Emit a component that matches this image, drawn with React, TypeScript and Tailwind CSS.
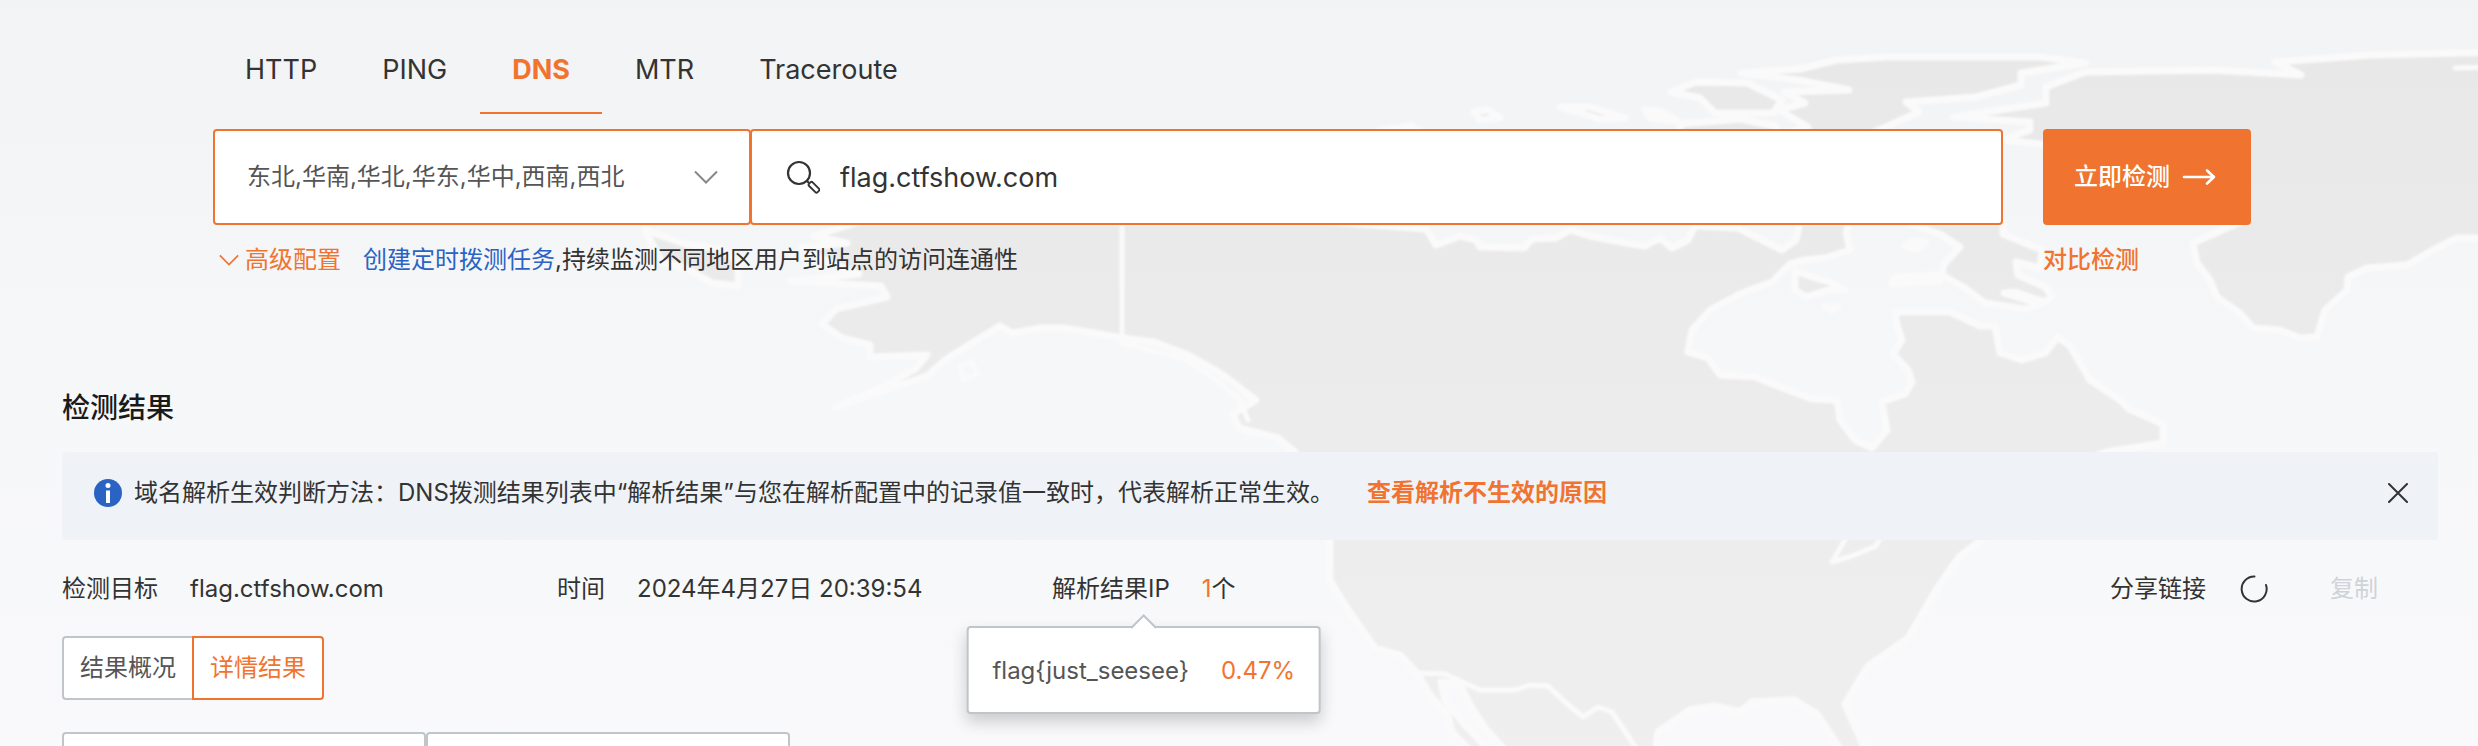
import { useState } from "react";

const TABS = ["HTTP", "PING", "DNS", "MTR", "Traceroute"];
const REGIONS = "东北,华南,华北,华东,华中,西南,西北";

const LAND = [
  // North America
  "M859 222L813 236 847 243 802 248 825 260 859 274 791 281 881 286 887 297 836 309 822 324 842 338 870 345 870 357 927 355 915 369 881 388 836 407 927 376 945 360 972 343 1000 326 1012 333 1040 328 1063 328 1100 334 1122 338 1154 342 1188 355 1215 370 1227 378 1256 400 1233 414 1239 428 1278 438 1295 452 1320 500 1330 540 1330 580 1345 605 1375 648 1400 655 1417 673 1430 695 1448 715 1452 732 1475 756 1495 756 1465 725 1445 700 1441 682 1460 684 1470 705 1485 728 1510 756 1655 756 1658 732 1690 710 1715 706 1740 712 1752 702 1794 700 1817 714 1845 756 1868 756 1845 704 1868 666 1908 638 1925 609 1936 590 1959 557 1981 540 2060 470 2106 452 2163 443 2163 424 2129 409 2120 400 2090 380 2070 346 2058 337 2045 353 2022 360 2000 353 1995 326 1980 326 1950 312 1895 312 1897 325 1902 340 1893 354 1908 370 1912 382 1905 394 1882 402 1887 430 1872 448 1855 440 1840 420 1837 400 1812 399 1780 387 1755 377 1720 375 1708 358 1688 352 1692 330 1710 310 1738 295 1750 290 1772 282 1790 264 1805 260 1825 258 1850 250 1846 232 1850 222 1800 222 1796 240 1782 250 1766 242 1738 228 1695 226 1688 240 1672 248 1660 238 1645 246 1626 243 1590 236 1570 230 1556 238 1532 239 1524 248 1480 247 1476 240 1460 236 1436 245 1426 229 1330 222Z",
  // Chukotka
  "M645 230L685 244 720 249 738 262 738 286 712 283 686 268 662 262Z",
  // Baffin
  "M1905 222L1940 234 1960 247 1944 264 1942 275 1965 288 1985 303 2025 309 2040 304 2004 293 2015 292 2045 302 2052 296 2045 287 2018 275 2016 262 2040 268 2042 250 2003 234 2003 222Z",
  "M1905 246L1912 241 1926 243 1916 249Z",
  "M1892 284L1895 277 1940 275 1940 281Z",
  "M1795 271L1812 277 1830 282 1845 290 1828 290 1806 297 1795 290Z",
  "M1825 307L1838 307 1832 310Z",
  // Greenland
  "M2500 52L2371 55 2275 62 2301 75 2212 70 2085 72 2046 87 2046 103 1954 117 2030 122 2030 130 2002 140 2100 150 2240 222 2193 243 2197 263 2210 280 2217 297 2240 313 2253 328 2280 330 2300 338 2317 337 2325 310 2347 290 2348 277 2367 268 2407 265 2433 250 2457 238 2500 238Z",
  // Ellesmere
  "M1741 73L1800 69 1836 60 1887 57 2040 57 2085 63 2021 73 2021 85 1976 97 1906 102 1919 112 1868 135 1779 135 1808 127 1779 110 1805 103 1785 92 1849 90 1798 80Z",
  "M1671 92L1696 82 1747 83 1782 100 1773 113 1715 113 1700 98Z",
  "M1560 107L1590 107 1625 118 1600 119Z",
  "M1645 110L1662 112 1677 121 1650 118Z",
  "M1474 112L1488 110 1500 118 1480 120Z",
  "M1382 130L1412 126 1422 134 1375 134Z",
  "M1680 124L1740 119 1775 126 1780 134 1680 134Z",
];

const SHORES = [
  "M1122 222V338",
  "M1122 343L1185 359 1216 380 1240 400 1248 420",
  "M1846 538L1832 562 1852 556 1876 546 1880 538",
  "M1417 673L1445 674 1480 690 1515 690 1530 685 1548 686 1565 702 1583 717 1598 707 1612 712 1640 754",
  "M960 366L972 362 978 374 964 380Z",
  "M2490 67L2455 68",
];

function WorldMap() {
  return (
    <svg
      aria-hidden="true"
      viewBox="0 0 2478 746"
      preserveAspectRatio="xMinYMin slice"
      className="pointer-events-none absolute inset-0 h-full w-full"
    >
      <defs>
        <linearGradient id="land" gradientUnits="userSpaceOnUse" x1="0" y1="50" x2="0" y2="746">
          <stop offset="0" stopColor="#e8e8e8" />
          <stop offset="1" stopColor="#efefef" />
        </linearGradient>
        <filter id="soften">
          <feGaussianBlur stdDeviation="1.2" />
        </filter>
      </defs>
      <g stroke="#fafafa" strokeWidth="7" strokeLinejoin="round" strokeLinecap="round" filter="url(#soften)">
        {LAND.map((d) => (
          <path key={d} d={d} fill="url(#land)" />
        ))}
        {SHORES.map((d) => (
          <path key={d} d={d} fill="none" strokeWidth="5" />
        ))}
      </g>
    </svg>
  );
}

function Chevron({ className }: { className: string }) {
  return (
    <svg aria-hidden="true" viewBox="0 0 24 14" fill="none" stroke="currentColor" strokeWidth="2" className={className}>
      <path d="M1 1.5L12 12.5 23 1.5" />
    </svg>
  );
}

function SearchIcon() {
  return (
    <svg aria-hidden="true" viewBox="0 0 34 34" fill="none" stroke="#333" strokeWidth="2.2" className="size-[34px] shrink-0">
      <circle cx="13" cy="13" r="11" />
      <path d="M20.5 20.5L23 23" />
      <rect x="22" y="24.8" width="12" height="5" rx="1.6" transform="rotate(45 28 27.3)" strokeWidth="1.9" />
    </svg>
  );
}

export default function App() {
  const [tab, setTab] = useState("DNS");
  const [host, setHost] = useState("flag.ctfshow.com");

  return (
    <div className="relative h-screen overflow-hidden bg-linear-to-b from-[#f2f3f5] via-[#f6f7f9] to-[#f9f9fb] font-['Inter','Noto_Sans_CJK_SC',sans-serif] text-2xl leading-8 text-[#333]">
      <WorldMap />
      <main className="relative">
        <section className="pr-[227px] pl-[213px] pt-[26px]">
          <nav className="flex gap-px">
            {TABS.map((t) => (
              <button
                key={t}
                type="button"
                onClick={() => setTab(t)}
                className={
                  t === tab
                    ? "h-[88px] border-y-2 border-t-transparent border-b-[#f0742f] px-8 text-[27px] font-bold text-[#f0742f]"
                    : "h-[88px] border-y-2 border-transparent px-8 text-[27px]"
                }
              >
                {t}
              </button>
            ))}
          </nav>

          <div className="mt-[15px] grid grid-cols-[1fr_208px] gap-x-10 gap-y-[19px]">
            <div className="flex">
              <div className="relative w-[538px]">
                <select
                  aria-label="检测区域"
                  className="h-24 w-full appearance-none rounded-[4px] border-2 border-[#f0742f] bg-white pr-20 pl-8 text-2xl text-[#555]"
                >
                  <option>{REGIONS}</option>
                </select>
                <Chevron className="pointer-events-none absolute top-[41px] right-[33px] h-3.5 w-6 text-[#888]" />
              </div>
              <label className="-ml-px flex h-24 flex-1 items-center gap-5 rounded-[4px] border-2 border-[#f0742f] bg-white px-[34px]">
                <SearchIcon />
                <input
                  aria-label="检测域名"
                  value={host}
                  onChange={(e) => setHost(e.target.value)}
                  className="min-w-0 flex-1 pt-0.5 text-[27px] outline-none"
                />
              </label>
            </div>
            <button
              type="button"
              className="flex h-24 items-center justify-center gap-3 rounded-[4px] bg-[#f0742f] pr-1 font-medium text-white"
            >
              立即检测
              <svg aria-hidden="true" viewBox="0 0 34 18" fill="none" stroke="currentColor" strokeWidth="2.6" strokeLinecap="round" strokeLinejoin="round" className="h-[18px] w-[34px]">
                <path d="M2 9H32M25 2.5L32 9 25 15.5" />
              </svg>
            </button>

            <div className="flex items-center">
              <button type="button" className="flex items-center gap-1.5 pl-1.5 text-[#f0742f]">
                <Chevron className="h-3 w-5" />
                高级配置
              </button>
              <p className="ml-[22px]">
                <a href="#task" className="text-[#2a63c4]">创建定时拨测任务</a>
                ,持续监测不同地区用户到站点的访问连通性
              </p>
            </div>
            <a href="#compare" className="font-medium text-[#f0742f]">对比检测</a>
          </div>
        </section>

        <section className="px-[62px] pt-28 pr-10">
          <h2 className="text-[28px] leading-10 font-medium text-[#1a1a1a]">检测结果</h2>

          <div className="mt-6 flex items-center rounded-[4px] bg-[#eff3f8] pt-[25px] pr-[30px] pb-[31px] pl-8">
            <svg aria-hidden="true" viewBox="0 0 28 28" className="size-7 shrink-0">
              <circle cx="14" cy="14" r="14" fill="#2a63c4" />
              <circle cx="14" cy="6.4" r="2.5" fill="#fff" />
              <rect x="12" y="11.5" width="4" height="12.5" fill="#fff" />
            </svg>
            <p className="ml-3">
              域名解析生效判断方法：DNS拨测结果列表中“解析结果”与您在解析配置中的记录值一致时，代表解析正常生效。
            </p>
            <a href="#reason" className="ml-[33px] font-semibold text-[#f0742f]">查看解析不生效的原因</a>
            <button type="button" aria-label="关闭" className="ml-auto">
              <svg aria-hidden="true" viewBox="0 0 20 20" stroke="#333" strokeWidth="2" strokeLinecap="round" className="size-5">
                <path d="M1 1L19 19M19 1L1 19" />
              </svg>
            </button>
          </div>

          <div className="mt-[33px] grid grid-cols-24">
            <div className="col-span-5 flex gap-8">
              <span>检测目标</span>
              <span>flag.ctfshow.com</span>
            </div>
            <div className="col-span-5 flex gap-8">
              <span>时间</span>
              <span>2024年4月27日 20:39:54</span>
            </div>
            <div className="col-span-5 flex">
              <div className="relative flex gap-8">
                <span>解析结果IP</span>
                <span>
                  <span className="text-[#f0742f]">1</span>个
                </span>
                <div
                  role="tooltip"
                  className="absolute top-[53px] left-1/2 flex -translate-x-1/2 gap-8 rounded-[4px] border-2 border-[#c0c5ca] bg-white px-6 pt-[27px] pb-[25px] whitespace-nowrap text-[#555] shadow-[0_8px_16px_rgba(0,0,0,0.18)]"
                >
                  <svg aria-hidden="true" viewBox="0 0 26 15" className="absolute -top-[14px] left-1/2 h-[15px] w-[26px] -translate-x-1/2">
                    <path d="M0.500 15L13 1.500 25.500 15Z" fill="#fff" />
                    <path d="M0.500 14L13 1.500 25.500 14" fill="none" stroke="#c0c5ca" strokeWidth="2" />
                  </svg>
                  <span>flag{"{"}just_seesee{"}"}</span>
                  <span className="text-[#f0742f]">0.47%</span>
                </div>
              </div>
            </div>
            <div className="col-span-9 flex items-center justify-end pr-[60px]">
              <span>分享链接</span>
              <svg aria-label="加载中" viewBox="0 0 28 28" fill="none" stroke="#333" strokeWidth="2" strokeLinecap="round" className="ml-[34px] size-7">
                <path d="M14.500 1.500A12.500 12.500 0 1 0 26 10" />
              </svg>
              <button type="button" disabled className="ml-[62px] text-[#cfd3d8]">复制</button>
            </div>
          </div>

          <div className="mt-[31px] flex">
            <button type="button" className="h-16 rounded-l-[4px] border-2 border-r-0 border-[#c0c5ca] bg-white px-4 text-[#555]">
              结果概况
            </button>
            <button type="button" className="h-16 rounded-r-[4px] border-2 border-[#f0742f] bg-white px-4 text-[#f0742f]">
              详情结果
            </button>
          </div>

          <div className="mt-8 flex">
            <input aria-label="筛选区域" className="h-16 w-[364px] rounded-[4px] border-2 border-[#c0c5ca] bg-white px-4" />
            <input aria-label="筛选运营商" className="h-16 w-[364px] rounded-[4px] border-2 border-[#c0c5ca] bg-white px-4" />
          </div>
        </section>
      </main>
    </div>
  );
}
